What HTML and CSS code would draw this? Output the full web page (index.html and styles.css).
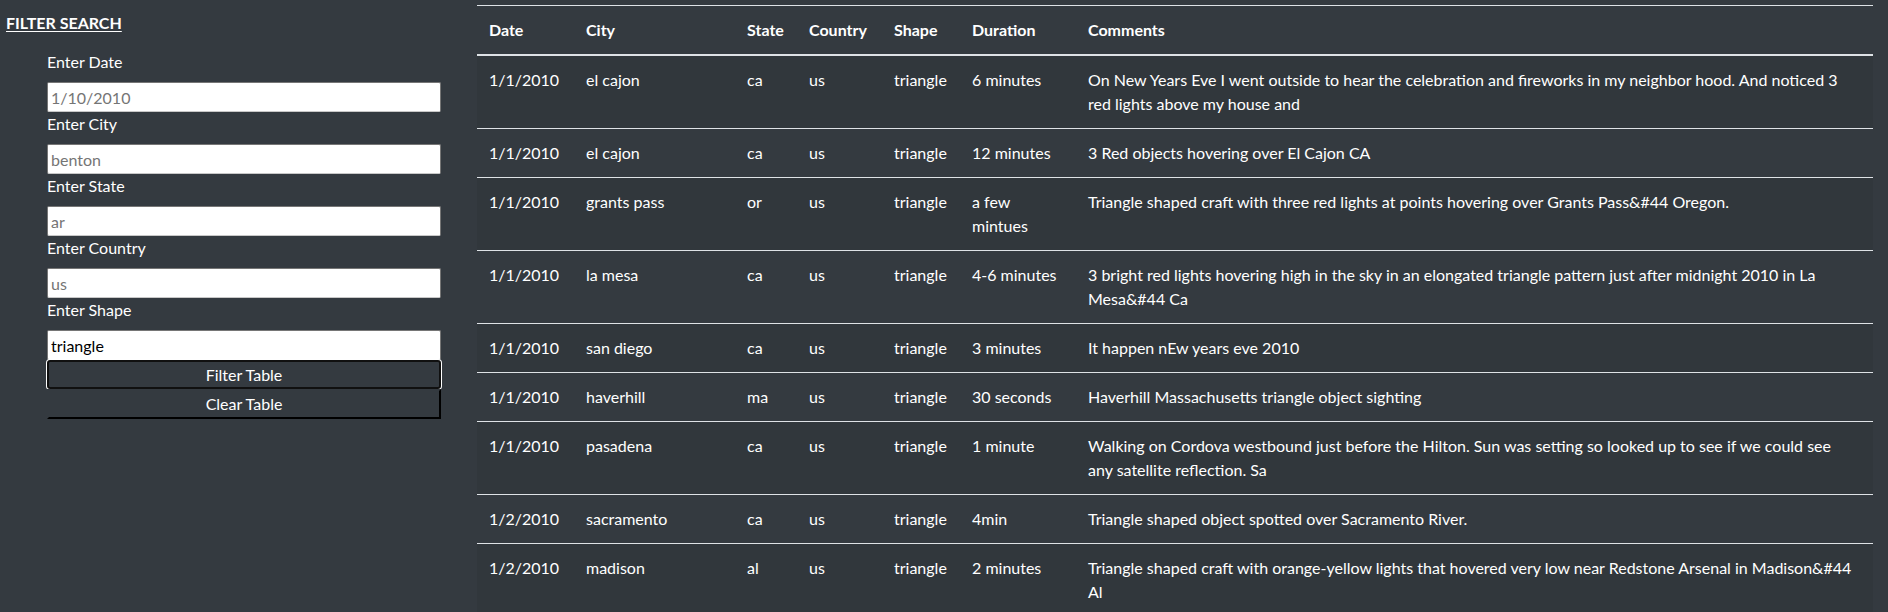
FILE: index.html
```html
<!DOCTYPE html>
<html lang="en">
<head>
<meta charset="utf-8">
<title>UFO Sightings</title>
<link rel="stylesheet" href="styles.css">
</head>
<body>
<div class="page">
  <aside class="sidebar">
    <h5 class="filter-title">FILTER SEARCH</h5>
    <form class="filters">
      <label class="filter-label" for="datetime">Enter Date</label>
      <input class="filter-input" id="datetime" type="text" placeholder="1/10/2010">
      <label class="filter-label" for="city">Enter City</label>
      <input class="filter-input" id="city" type="text" placeholder="benton">
      <label class="filter-label" for="state">Enter State</label>
      <input class="filter-input" id="state" type="text" placeholder="ar">
      <label class="filter-label" for="country">Enter Country</label>
      <input class="filter-input" id="country" type="text" placeholder="us">
      <label class="filter-label" for="shape">Enter Shape</label>
      <input class="filter-input" id="shape" type="text" value="triangle">
      <button class="btn btn-focused" type="button">Filter Table</button>
      <button class="btn" type="button">Clear Table</button>
    </form>
  </aside>
  <main class="results">
    <table class="ufo-table">
      <colgroup>
        <col class="c-date"><col class="c-city"><col class="c-state"><col class="c-country"><col class="c-shape"><col class="c-duration"><col class="c-comments">
      </colgroup>
      <thead>
        <tr><th>Date</th><th>City</th><th>State</th><th>Country</th><th>Shape</th><th>Duration</th><th>Comments</th></tr>
      </thead>
      <tbody>
        <tr><td>1/1/2010</td><td>el cajon</td><td>ca</td><td>us</td><td>triangle</td><td>6 minutes</td><td class="comment">On New Years Eve I went outside to hear the celebration and fireworks in my neighbor hood. And noticed 3 red lights above my house and</td></tr>
        <tr><td>1/1/2010</td><td>el cajon</td><td>ca</td><td>us</td><td>triangle</td><td>12 minutes</td><td class="comment">3 Red objects hovering over El Cajon CA</td></tr>
        <tr><td>1/1/2010</td><td>grants pass</td><td>or</td><td>us</td><td>triangle</td><td>a few mintues</td><td class="comment">Triangle shaped craft with three red lights at points hovering over Grants Pass&amp;#44 Oregon.</td></tr>
        <tr><td>1/1/2010</td><td>la mesa</td><td>ca</td><td>us</td><td>triangle</td><td>4-6 minutes</td><td class="comment">3 bright red lights hovering high in the sky in an elongated triangle pattern just after midnight 2010 in La Mesa&amp;#44 Ca</td></tr>
        <tr><td>1/1/2010</td><td>san diego</td><td>ca</td><td>us</td><td>triangle</td><td>3 minutes</td><td class="comment">It happen nEw years eve 2010</td></tr>
        <tr><td>1/1/2010</td><td>haverhill</td><td>ma</td><td>us</td><td>triangle</td><td>30 seconds</td><td class="comment">Haverhill Massachusetts triangle object sighting</td></tr>
        <tr><td>1/1/2010</td><td>pasadena</td><td>ca</td><td>us</td><td>triangle</td><td>1 minute</td><td class="comment">Walking on Cordova westbound just before the Hilton. Sun was setting so looked up to see if we could see any satellite reflection. Sa</td></tr>
        <tr><td>1/2/2010</td><td>sacramento</td><td>ca</td><td>us</td><td>triangle</td><td>4min</td><td class="comment">Triangle shaped object spotted over Sacramento River.</td></tr>
        <tr><td>1/2/2010</td><td>madison</td><td>al</td><td>us</td><td>triangle</td><td>2 minutes</td><td class="comment">Triangle shaped craft with orange-yellow lights that hovered very low near Redstone Arsenal in Madison&amp;#44 Al</td></tr>
      </tbody>
    </table>
  </main>
</div>
</body>
</html>
```

FILE: styles.css
```css
html, body {
  margin: 0;
  padding: 0;
}

body {
  background: #343a40;
  color: #ffffff;
  font-family: Lato, "Liberation Sans", sans-serif;
  font-size: 16px;
  line-height: 1.5;
  overflow: hidden;
}

.page {
  display: grid;
  grid-template-columns: 477px 1396px;
  align-items: start;
}

.sidebar {
  padding: 11px 0 0 6px;
}

.filter-title {
  margin: 0 0 15px 0;
  font-size: 16px;
  font-weight: 700;
  line-height: 24px;
  text-decoration: underline;
  text-underline-offset: 2px;
}

.filters {
  display: flex;
  flex-direction: column;
  width: 394px;
  margin-left: 41px;
}

.filter-label {
  display: block;
  line-height: 24px;
  margin-bottom: 8px;
}

.filter-input {
  box-sizing: border-box;
  height: 30px;
  margin: 0;
  padding: 1px 3px;
  border: 1px solid #767676;
  border-bottom-color: #c8c8c8;
  border-radius: 2px;
  background: #ffffff;
  color: #000000;
  font-family: inherit;
  font-size: 16px;
  line-height: 24px;
}

.filter-input::placeholder {
  color: #757575;
}

.btn {
  box-sizing: border-box;
  height: 30px;
  margin: 0;
  padding: 1px 6px;
  border: 2px solid #000000;
  border-top-color: #343a40;
  border-left-color: #343a40;
  background: #343a40;
  color: #ffffff;
  font-family: inherit;
  font-size: 16px;
  line-height: 24px;
  text-align: center;
}

.btn-focused {
  border-color: #101010;
  border-radius: 3px;
  box-shadow: 0 0 0 1px #ffffff;
  height: 29px;
}

.results {
  padding-top: 5px;
}

.ufo-table {
  width: 1396px;
  table-layout: fixed;
  border-collapse: collapse;
  color: #ffffff;
}

.c-date { width: 97px; }
.c-city { width: 161px; }
.c-state { width: 62px; }
.c-country { width: 85px; }
.c-shape { width: 78px; }
.c-duration { width: 116px; }
.c-comments { width: 797px; }

.ufo-table th,
.ufo-table td {
  padding: 12px;
  text-align: left;
  vertical-align: top;
  border-top: 1px solid #dee2e6;
}

.ufo-table td.comment {
  padding-right: 18px;
}

.ufo-table thead th {
  vertical-align: bottom;
  border-bottom: 2px solid #dee2e6;
  font-weight: 700;
}

.ufo-table tbody tr:nth-of-type(odd) {
  background-color: rgba(0, 0, 0, 0.05);
}
```
